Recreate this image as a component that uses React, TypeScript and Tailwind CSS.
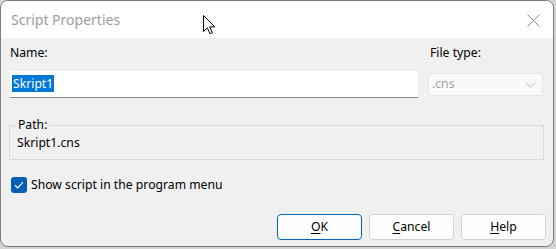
export default function App() {
  const font = { fontFamily: '"Noto Sans", "Open Sans", sans-serif' };

  return (
    <div className="w-[556px] h-[249px] bg-[#d4d4d4] overflow-hidden" style={font}>
      <div className="relative w-[554px] h-[247px] rounded-[8px] border border-[#7c7c7c] bg-[#f0f0f0] overflow-hidden flex flex-col">
        {/* title bar */}
        <div className="h-[37px] bg-white flex items-center justify-between pl-[10px] pr-[13px] shrink-0">
          <span className="text-[14px] text-[#9d9d9d] leading-none">Script Properties</span>
          <svg width="13" height="13" viewBox="0 0 13 13" className="mt-[1px]">
            <path d="M0.5 0.5 L12.5 12.5 M12.5 0.5 L0.5 12.5" stroke="#8a8a8a" strokeWidth="1" />
          </svg>
        </div>

        {/* mouse pointer */}
        <svg width="14" height="21" viewBox="0 0 14 21" className="absolute left-[202px] top-[14px]">
          <path
            d="M0.5 0.5 L0.5 16.5 L4.3 12.8 L7 18.8 L9.3 17.8 L6.7 11.9 L11.8 11.9 Z"
            fill="#fff"
            stroke="#000"
            strokeWidth="1"
            strokeLinejoin="miter"
          />
        </svg>

        {/* body */}
        <div className="flex flex-col pl-[9px] pr-[9px] pt-[6px] text-[12.2px] text-black">
          <div className="flex gap-[10px]">
            <div className="w-[408px] flex flex-col">
              <span className="h-[18px] leading-[18px]">Name:</span>
              <div className="mt-[9px] h-[27px] bg-white border-b border-[#868686] pl-[2px] flex items-center">
                <span className="bg-[#0078d7] text-white leading-[17px] px-[1px] -mt-[1px]">Skript1</span>
              </div>
            </div>
            <div className="w-[115px] flex flex-col">
              <span className="h-[18px] leading-[18px] pl-[2px]">File type:</span>
              <div className="mt-[11px] h-[23px] bg-[#f9f9f9] border border-[#e6e6e6] rounded-[2px] flex items-center justify-between pl-[3px] pr-[6px]">
                <span className="text-[#a3a3a3]">.cns</span>
                <svg width="11" height="6" viewBox="0 0 11 6">
                  <path d="M0.5 0.5 L5.5 5 L10.5 0.5" fill="none" stroke="#bdbdbd" strokeWidth="1" />
                </svg>
              </div>
            </div>
          </div>

          <fieldset className="mt-[18px] ml-[-1px] border border-[#dadada] pl-[6px] pr-[6px] pb-[7px]">
            <legend className="px-[2px] leading-[18px]">Path:</legend>
            <div className="pl-[1px] leading-[18px]">Skript1.cns</div>
          </fieldset>

          <div className="mt-[16px] ml-[1px] flex items-center gap-[4px]">
            <div className="w-[16px] h-[16px] rounded-[3px] bg-[#005fb8] flex items-center justify-center">
              <svg width="10" height="8" viewBox="0 0 10 8">
                <path d="M1 4.2 L3.7 6.8 L9 1.2" fill="none" stroke="#fff" strokeWidth="1.2" />
              </svg>
            </div>
            <span className="leading-[18px]">Show script in the program menu</span>
          </div>

          <div className="mt-[20px] mr-[-2px] flex justify-end gap-[7px]">
            <button className="w-[85px] h-[26px] rounded-[4px] border border-[#0067c0] bg-[#fdfdfd]">
              <span className="underline underline-offset-2">O</span>K
            </button>
            <button className="w-[85px] h-[26px] rounded-[4px] border border-[#d2d2d2] bg-[#fdfdfd]">
              <span className="underline underline-offset-2">C</span>ancel
            </button>
            <button className="w-[85px] h-[26px] rounded-[4px] border border-[#d2d2d2] bg-[#fdfdfd]">
              <span className="underline underline-offset-2">H</span>elp
            </button>
          </div>
        </div>
      </div>
    </div>
  );
}
